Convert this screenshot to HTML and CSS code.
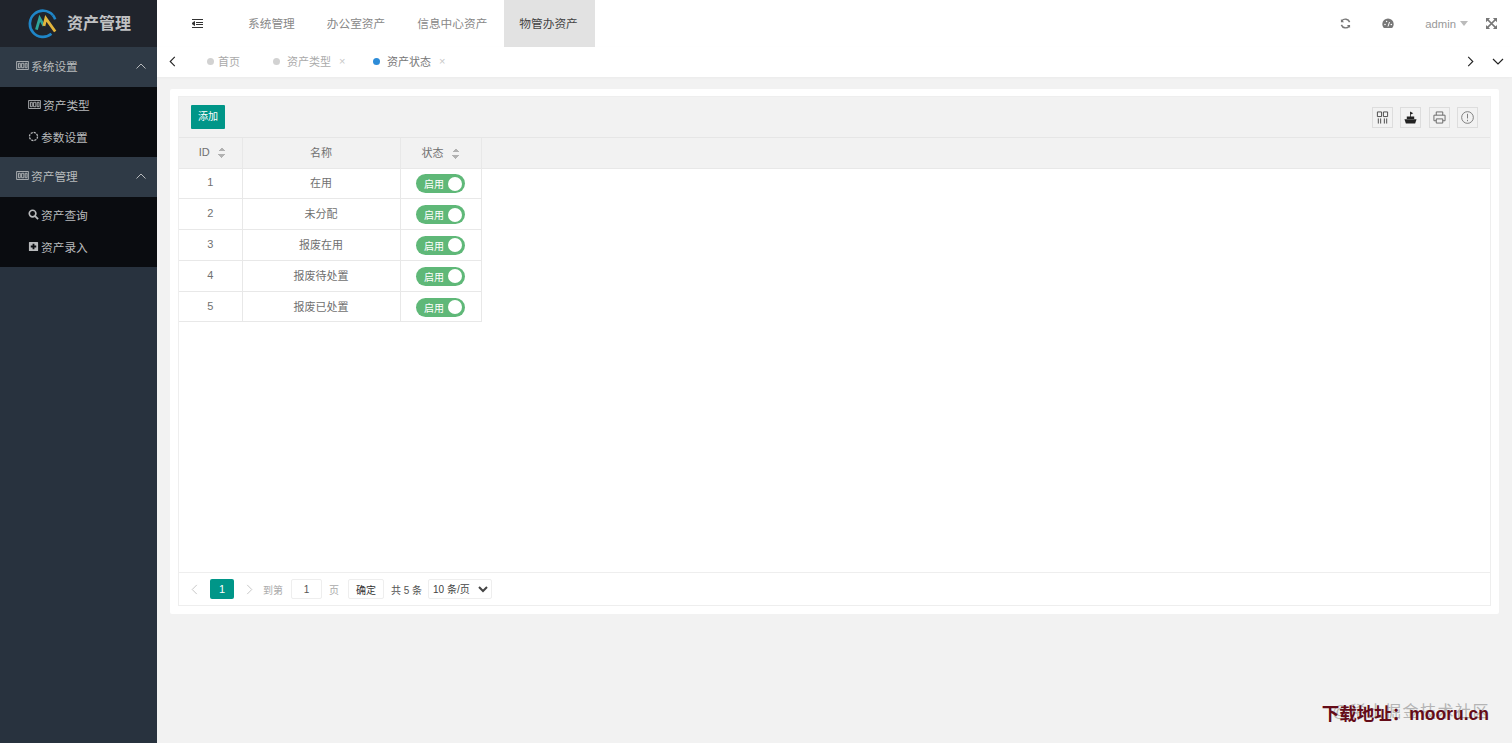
FILE: index.html
```html
<!DOCTYPE html>
<html lang="zh">
<head>
    <meta charset="UTF-8">
    <title>资产管理</title>
    <link rel="stylesheet" href="styles.css">
</head>
<body>
    <div class="app">
        <aside class="side">
            <div class="logo">
                <svg class="logo_img" viewBox="0 0 32 32" width="30" height="30">
                    <path d="M25 26.500A14 14 0 1 1 26.500 6.500" fill="none" stroke="#1f86c8" stroke-width="2.800"/>
                    <path d="M26.500 6.500A14 14 0 0 1 29 11" fill="none" stroke="#1f86c8" stroke-width="2.800"/>
                    <path d="M9 22L12.500 10L17 18" fill="none" stroke="#2fa59a" stroke-width="3"/>
                    <path d="M17 18L19 10L29 24" fill="none" stroke="#e3b53c" stroke-width="3"/>
                </svg>
                <span class="logo_text">资产管理</span>
            </div>

            <div class="group">
                <svg class="ico" viewBox="0 0 14 10"><path d="M.5.500h13v9H.5zM2.500 2.500h2v5h-2zM6 2.500h2.500v5H6zM10 2.500h2v5h-2z" fill="none" stroke="currentColor"/></svg>
                <span>系统设置</span>
                <svg class="arrow" viewBox="0 0 10 6"><path d="M.5 5.500L5 1l4.500 4.500" fill="none" stroke="currentColor"/></svg>
            </div>
            <div class="sub">
                <div class="sub_item">
                    <svg class="ico" viewBox="0 0 14 10"><path d="M.5.500h13v9H.5zM2.500 2.500h2v5h-2zM6 2.500h2.500v5H6zM10 2.500h2v5h-2z" fill="none" stroke="currentColor"/></svg>
                    <span>资产类型</span>
                </div>
                <div class="sub_item">
                    <svg class="ico_sq" viewBox="0 0 12 12"><circle cx="6" cy="6" r="4.400" fill="none" stroke="currentColor" stroke-width="1.400" stroke-dasharray="2.400 1"/></svg>
                    <span>参数设置</span>
                </div>
            </div>

            <div class="group">
                <svg class="ico" viewBox="0 0 14 10"><path d="M.5.500h13v9H.5zM2.500 2.500h2v5h-2zM6 2.500h2.500v5H6zM10 2.500h2v5h-2z" fill="none" stroke="currentColor"/></svg>
                <span>资产管理</span>
                <svg class="arrow" viewBox="0 0 10 6"><path d="M.5 5.500L5 1l4.500 4.500" fill="none" stroke="currentColor"/></svg>
            </div>
            <div class="sub">
                <div class="sub_item">
                    <svg class="ico_sq" viewBox="0 0 12 12"><circle cx="5" cy="5" r="3.600" fill="none" stroke="currentColor" stroke-width="1.800"/><path d="M7.500 7.500L11 11" stroke="currentColor" stroke-width="2"/></svg>
                    <span>资产查询</span>
                </div>
                <div class="sub_item">
                    <svg class="ico_sq" viewBox="0 0 12 12"><path d="M1.500 1h9a.5.5 0 0 1 .5.500v9a.5.5 0 0 1-.5.500h-9a.5.5 0 0 1-.5-.5v-9a.5.5 0 0 1 .5-.5zM5 3v2H3v2h2v2h2V7h2V5H7V3z" fill="currentColor" fill-rule="evenodd"/></svg>
                    <span>资产录入</span>
                </div>
            </div>
        </aside>

        <div class="main">
            <header class="top">
                <svg class="fold" viewBox="0 0 11 9"><path d="M0 .5h11M4 3.500h7M4 5.500h7M0 8.500h11M0 4.500l2.500-2v4z" stroke="#333" fill="#333"/></svg>
                <nav class="nav">
                    <a class="nav_item">系统管理</a>
                    <a class="nav_item">办公室资产</a>
                    <a class="nav_item">信息中心资产</a>
                    <a class="nav_item active">物管办资产</a>
                </nav>
                <div class="top_right">
                    <svg class="top_ico" viewBox="0 0 12 12"><path d="M10.500 4.500A5 5 0 0 0 2 3M1.500 7.500A5 5 0 0 0 10 9" fill="none" stroke="#777" stroke-width="1.600"/><path d="M1 1v3.500h3.500zM11 11V7.500H7.500z" fill="#777"/></svg>
                    <svg class="top_ico dash" viewBox="0 0 12 10"><path d="M1.800 9.500A5.700 5.700 0 1 1 10.200 9.500z" fill="#777"/><path d="M6 8L7.500 3.500" stroke="#fff"/><circle cx="3" cy="6" r=".8" fill="#fff"/><circle cx="9.300" cy="6" r=".8" fill="#fff"/><circle cx="4.600" cy="3" r=".7" fill="#fff"/></svg>
                    <span class="user">admin</span>
                    <span class="caret"></span>
                    <svg class="top_ico full" viewBox="0 0 12 12"><path d="M1.500 1.500l9 9M10.500 1.500l-9 9" stroke="#777" stroke-width="1.600"/><path d="M0 0h4.500L0 4.500zM12 0v4.500L7.500 0zM0 12V7.500L4.500 12zM12 12H7.500L12 7.500z" fill="#777"/></svg>
                </div>
            </header>

            <div class="tabs">
                <svg class="tab_arrow" viewBox="0 0 7 12"><path d="M6 1L1 6l5 5" fill="none" stroke="#222" stroke-width="1.200"/></svg>
                <div class="tab_list">
                    <div class="tab tab_home"><i class="dot"></i>首页</div>
                    <div class="tab tab_type"><i class="dot"></i><span class="tab_name">资产类型</span><span class="tab_x">×</span></div>
                    <div class="tab tab_on"><i class="dot blue"></i><span class="tab_name">资产状态</span><span class="tab_x">×</span></div>
                </div>
                <svg class="tab_arrow" viewBox="0 0 7 12"><path d="M1 1l5 5-5 5" fill="none" stroke="#222" stroke-width="1.200"/></svg>
                <svg class="tab_down" viewBox="0 0 12 7"><path d="M1 1l5 5 5-5" fill="none" stroke="#222" stroke-width="1.200"/></svg>
            </div>

            <div class="content">
                <div class="card">
                    <div class="panel">
                        <div class="toolbar">
                            <button class="btn_add">添加</button>
                            <div class="tools">
                                <span class="tool"><svg viewBox="0 0 14 14"><path d="M1.500 1h4.500v5H1.500zM8 1h4.500v5H8zM2.500 8v5.500M5 8v5.500M9 8v5.500M11.500 8v5.500" fill="none" stroke="#444"/></svg></span>
                                <span class="tool"><svg viewBox="0 0 14 14"><path d="M.5 9h13l-1.500 4.500H2z" fill="#222"/><path d="M3 8.500V6h8v2.500zM6.500 6V.5l3.500 2-2.700 1.300V6z" fill="#222"/></svg></span>
                                <span class="tool"><svg viewBox="0 0 14 14"><path d="M3.500 4.500V1h7v3.500M3.500 10.500H1V4.500h12v6h-2.500M3.500 8.500h7V13h-7z" fill="none" stroke="#666"/></svg></span>
                                <span class="tool"><svg viewBox="0 0 14 14"><circle cx="7" cy="7" r="6.300" fill="none" stroke="#777"/><path d="M7 3v5M7 9.500v1.500" stroke="#777"/></svg></span>
                            </div>
                        </div>

                        <div class="table_wrap">
                            <table class="table">
                                <thead>
                                    <tr>
                                        <th class="col_id">ID<i class="sort"></i></th>
                                        <th class="col_name">名称</th>
                                        <th class="col_state">状态<i class="sort"></i></th>
                                    </tr>
                                </thead>
                                <tbody>
                                    <tr><td>1</td><td>在用</td><td><span class="switch">启用<i></i></span></td></tr>
                                    <tr><td>2</td><td>未分配</td><td><span class="switch">启用<i></i></span></td></tr>
                                    <tr><td>3</td><td>报废在用</td><td><span class="switch">启用<i></i></span></td></tr>
                                    <tr><td>4</td><td>报废待处置</td><td><span class="switch">启用<i></i></span></td></tr>
                                    <tr><td>5</td><td>报废已处置</td><td><span class="switch">启用<i></i></span></td></tr>
                                </tbody>
                            </table>
                        </div>

                        <div class="pager">
                            <svg class="page_arrow" viewBox="0 0 7 12"><path d="M6 1L1 6l5 5" fill="none" stroke="#c2c2c2"/></svg>
                            <span class="page_num">1</span>
                            <svg class="page_arrow" viewBox="0 0 7 12"><path d="M1 1l5 5-5 5" fill="none" stroke="#c2c2c2"/></svg>
                            <span class="page_text muted">到第</span>
                            <input class="page_input" value="1">
                            <span class="page_text muted">页</span>
                            <button class="page_ok">确定</button>
                            <span class="page_total">共 5 条</span>
                            <select class="page_size"><option>10 条/页</option></select>
                        </div>
                    </div>
                </div>
            </div>
        </div>
    </div>

    <div class="mark_gray">@稀土掘金技术社区</div>
    <div class="mark_red">下载地址：mooru.cn</div>
</body>
</html>
```

FILE: styles.css
```css
html,body{
    height: 100%;
}

*{
    margin: 0;
    padding: 0;
    box-sizing: border-box;
}

body{
    font-family: "Liberation Sans", "Noto Sans CJK SC", sans-serif;
    font-size: 11px;
    color: #707070;
    background-color: #f2f2f2;
    overflow: hidden;
}

.app{
    height: 743px;
    display: flex;
}

/* left menu */
.side{
    width: 157px;
    flex-shrink: 0;
    background-color: #28323e;
    color: #b8babc;
    font-size: 11.700px;
}

.logo{
    height: 47px;
    background-color: #20242c;
    display: flex;
    align-items: center;
    padding-left: 28px;
}

.logo_img{
    flex-shrink: 0;
}

.logo_text{
    margin-left: 9px;
    margin-bottom: 3px;
    font-size: 16px;
    font-weight: 700;
    color: #c0c1c3;
}

.group{
    height: 40px;
    background-color: #2f3a46;
    display: flex;
    align-items: center;
    padding-left: 16px;
    padding-right: 11px;
    padding-bottom: 3px;
}

.group .arrow{
    margin-left: auto;
    width: 10px;
    height: 6px;
}

.ico{
    width: 13px;
    height: 9px;
    margin-right: 2px;
    flex-shrink: 0;
}

.ico_sq{
    width: 11px;
    height: 11px;
    margin-right: 2px;
    flex-shrink: 0;
}

.sub{
    height: 70px;
    background-color: #0a0c10;
    padding-top: 3px;
}

.sub_item{
    height: 32px;
    display: flex;
    align-items: center;
    padding-left: 28px;
    padding-bottom: 3px;
}

/* top bar */
.main{
    flex: 1;
    min-width: 0;
    display: flex;
    flex-direction: column;
}

.top{
    height: 47px;
    background-color: #fff;
    display: flex;
    align-items: center;
    padding-left: 35px;
}

.fold{
    width: 11px;
    height: 9px;
}

.nav{
    height: 100%;
    display: flex;
    gap: 2px;
    margin-left: 30px;
}

.nav_item{
    height: 100%;
    padding: 0 15px 3px 15px;
    display: flex;
    align-items: center;
    color: #888;
    font-size: 11.700px;
}

.nav_item.active{
    padding-right: 17px;
    background-color: #e2e2e2;
    color: #444;
}

.top_right{
    margin-left: auto;
    display: flex;
    align-items: center;
    padding-right: 15px;
}

.top_ico{
    width: 11px;
    height: 11px;
}

.dash{
    width: 12px;
    margin-left: 31px;
}

.user{
    margin-left: 31px;
    color: #999;
    font-size: 11.300px;
}

.caret{
    margin-left: 4px;
    margin-top: 4px;
    border: 4px solid transparent;
    border-top: 5px solid #bbb;
}

.full{
    margin-left: 18px;
}

/* tabs */
.tabs{
    height: 30px;
    background-color: #fff;
    display: flex;
    align-items: center;
    padding-left: 12px;
    padding-right: 8px;
    padding-bottom: 2px;
    box-shadow: 0 1px 3px rgba(0, 0, 0, 0.03);
}

.tab_arrow{
    width: 7px;
    height: 11px;
    flex-shrink: 0;
}

.tab_down{
    width: 12px;
    height: 7px;
    margin-left: 18px;
}

.tab_list{
    flex: 1;
    display: flex;
    align-items: center;
    padding-left: 31px;
    color: #aaa;
}

.tab{
    display: flex;
    align-items: center;
}

.tab_type{
    margin-left: 33px;
}

.tab_on{
    margin-left: 26px;
    color: #777;
}

.dot{
    width: 7px;
    height: 7px;
    border-radius: 50%;
    background-color: #d2d2d2;
    margin-right: 4px;
}

.tab_type .dot,.tab_on .dot{
    margin-right: 7px;
}

.dot.blue{
    background-color: #2d8cd8;
}

.tab_x{
    width: 8px;
    margin-left: 8px;
    font-size: 11px;
    color: #c8c8c8;
}

/* page body */
.content{
    flex: 1;
    padding: 12px 13px 129px 13px;
}

.card{
    height: 525px;
    background-color: #fff;
    padding: 7px 8px 8px 8px;
    border-radius: 2px;
}

.panel{
    height: 100%;
    border: 1px solid #eee;
    display: flex;
    flex-direction: column;
}

.toolbar{
    height: 41px;
    flex-shrink: 0;
    background-color: #f2f2f2;
    border-bottom: 1px solid #e6e6e6;
    display: flex;
    align-items: center;
    padding-left: 12px;
    padding-right: 12px;
}

.btn_add{
    width: 34px;
    height: 24px;
    border: none;
    border-radius: 1px;
    background-color: #009688;
    color: #fff;
    font-family: inherit;
    font-size: 10px;
    padding-bottom: 2px;
    margin-bottom: 1px;
}

.tools{
    margin-left: auto;
    display: flex;
    gap: 7.300px;
}

.tool{
    width: 21px;
    height: 21px;
    border: 1px solid #ddd;
    display: flex;
    align-items: center;
    justify-content: center;
}

.tool svg{
    width: 13px;
    height: 13px;
}

.table_wrap{
    flex: 1;
    min-height: 0;
    background: linear-gradient(#f2f2f2 30px, #e8e8e8 30px, #e8e8e8 31px, transparent 31px);
}

.table{
    border-collapse: collapse;
    table-layout: fixed;
    width: 302px;
}

.table th,.table td{
    border: 1px solid #e8e8e8;
    text-align: center;
    font-weight: 400;
    color: #707070;
    padding-bottom: 2px;
}

.table tr>:first-child{
    border-left: none;
}

.table th{
    height: 30px;
    background-color: #f2f2f2;
    border-top: none;
    padding-bottom: 1px;
}

.table td{
    height: 30.800px;
}

.table td:last-child{
    padding-bottom: 0;
    padding-top: 1px;
}

.col_id{
    width: 63px;
}

.table th.col_id{
    padding-left: 4px;
}

.col_name{
    width: 158px;
}

.col_state{
    width: 81px;
}

.sort{
    display: inline-block;
    width: 8px;
    height: 11px;
    margin-left: 8px;
    vertical-align: -2px;
    background:
        linear-gradient(to top left, #b2b2b2 50%, transparent 50%) 0 0 / 4px 4px no-repeat,
        linear-gradient(to top right, #b2b2b2 50%, transparent 50%) 4px 0 / 4px 4px no-repeat,
        linear-gradient(to bottom left, #b2b2b2 50%, transparent 50%) 0 100% / 4px 4px no-repeat,
        linear-gradient(to bottom right, #b2b2b2 50%, transparent 50%) 4px 100% / 4px 4px no-repeat;
}

.switch{
    display: inline-flex;
    align-items: center;
    justify-content: space-between;
    width: 49px;
    height: 19px;
    border-radius: 10px;
    background-color: #5fb878;
    color: #fff;
    font-size: 10px;
    padding-left: 8px;
    padding-right: 3px;
    vertical-align: middle;
}

.switch i{
    width: 14px;
    height: 14px;
    border-radius: 50%;
    background-color: #fff;
}

/* pagination */
.pager{
    height: 33px;
    flex-shrink: 0;
    border-top: 1px solid #eee;
    display: flex;
    align-items: center;
    padding-left: 12px;
}

.page_arrow{
    width: 7px;
    height: 11px;
}

.page_num{
    width: 24px;
    height: 20px;
    margin-left: 12px;
    margin-right: 12px;
    background-color: #009688;
    color: #fff;
    border-radius: 2px;
    display: flex;
    align-items: center;
    justify-content: center;
}

.page_text{
    font-size: 10px;
}

.muted{
    color: #aaa;
}

.page_arrow + .muted{
    margin-left: 10px;
}

.page_input{
    width: 31px;
    height: 20px;
    margin-left: 8px;
    margin-right: 7px;
    border: 1px solid #eee;
    border-radius: 2px;
    text-align: center;
    font-family: inherit;
    font-size: 10px;
    color: #555;
}

.page_ok{
    width: 36px;
    height: 20px;
    margin-left: 9px;
    margin-right: 7px;
    border: 1px solid #eee;
    border-radius: 2px;
    background-color: #fff;
    font-family: inherit;
    font-size: 10px;
    color: #333;
}

.page_total{
    width: 30px;
    white-space: nowrap;
    font-size: 10px;
    color: #555;
}

.page_size{
    width: 64px;
    height: 20px;
    margin-left: 7px;
    border: 1px solid #eee;
    border-radius: 2px;
    background-color: #fff;
    font-family: inherit;
    font-size: 10px;
    color: #444;
}

/* watermark over the page */
.mark_gray{
    position: absolute;
    right: 22px;
    top: 698px;
    font-size: 16px;
    letter-spacing: 1.500px;
    color: #b4b4b4;
}

.mark_red{
    position: absolute;
    right: 23px;
    top: 700px;
    font-size: 17.500px;
    font-weight: 700;
    color: #650c18;
}
```
